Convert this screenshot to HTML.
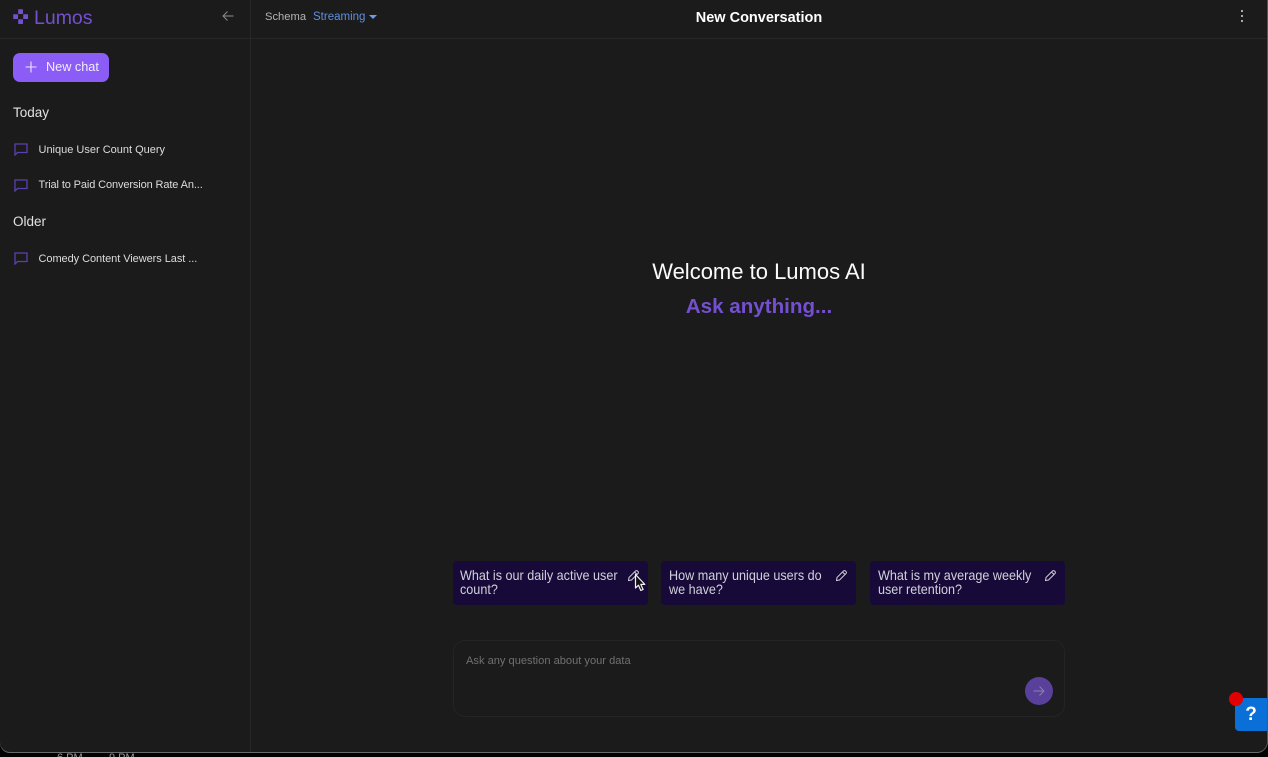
<!DOCTYPE html>
<html lang="en">
<head>
<meta charset="utf-8">
<title>Lumos</title>
<style>
html,body{margin:0;padding:0;width:1268px;height:757px;overflow:hidden;background:#000;font-family:"Liberation Sans",sans-serif;}
.abs,.t{position:absolute;}
.t{white-space:nowrap;line-height:1;}
#app{position:absolute;left:0;top:0;width:1267px;height:752px;background:#1b1b1b;border-radius:0 0 10px 10px;box-shadow:0 1px 0 #6a6a6a,1px 0 0 #555;overflow:hidden;}
.card{position:absolute;top:561px;width:195px;height:44px;background:#170a38;border-radius:4px;}
.card .q{position:absolute;left:7px;top:6.500px;font-size:14px;line-height:14px;color:#d2d0dc;white-space:nowrap;transform:scaleX(.9);transform-origin:left top;}
.card svg{position:absolute;top:7px;left:174px;}
.side{font-size:11px;color:#dcdcdc;}
</style>
</head>
<body>
<div class="t" style="left:57px;top:753px;font-size:11px;color:#999;height:4px;overflow:hidden;">6 PM</div>
<div class="t" style="left:109px;top:753px;font-size:11px;color:#999;height:4px;overflow:hidden;">9 PM</div>
<div id="app">
  <div class="abs" style="left:250px;top:0;width:1px;height:752px;background:#272727;"></div>
  <div class="abs" style="left:0;top:38px;width:1267px;height:1px;background:#272727;"></div>

  <svg class="abs" style="left:13px;top:9px;" width="16" height="16" viewBox="0 0 16 16" fill="#7450d0">
    <rect x="5.200" y="0.200" width="4.800" height="4.800" rx=".5"/>
    <rect x="0.200" y="5.200" width="4.800" height="4.800" rx=".5"/>
    <rect x="10.200" y="5.200" width="4.800" height="4.800" rx=".5"/>
    <rect x="5.200" y="10.200" width="4.800" height="4.800" rx=".5"/>
  </svg>
  <div class="t" style="left:34px;top:8.500px;font-size:19.500px;color:#7450d0;">Lumos</div>

  <svg class="abs" style="left:222px;top:10px;" width="12" height="12" viewBox="0 0 12 12" fill="none" stroke="#8f8f8f" stroke-width=".9">
    <path d="M11.500 6H1M5.500 1.500L1 6l4.500 4.500"/>
  </svg>

  <div class="t" style="left:265px;top:12px;font-size:11.200px;color:#b4b4b4;">Schema</div>
  <div class="t" style="left:313px;top:12px;font-size:11.500px;color:#5f8fe0;">Streaming</div>
  <div class="abs" style="left:369px;top:15px;width:0;height:0;border-left:4px solid transparent;border-right:4px solid transparent;border-top:4px solid #6f9ce8;"></div>

  <div class="t" style="left:659px;top:10.500px;width:200px;text-align:center;font-size:14.500px;font-weight:700;color:#fff;">New Conversation</div>

  <div class="abs" style="left:1241px;top:10px;width:2px;height:2px;background:#a8a8a8;"></div>
  <div class="abs" style="left:1241px;top:15px;width:2px;height:2px;background:#a8a8a8;"></div>
  <div class="abs" style="left:1241px;top:20px;width:2px;height:2px;background:#a8a8a8;"></div>

  <div class="abs" style="left:13px;top:53px;width:96px;height:29px;background:#8b5cf6;border-radius:7px;"></div>
  <svg class="abs" style="left:25px;top:61px;" width="12" height="12" viewBox="0 0 12 12" stroke="#ece6fc" stroke-width="1.100" fill="none">
    <path d="M6 0.500V11.500M0.500 6H11.500"/>
  </svg>
  <div class="t" style="left:46px;top:61px;font-size:12.700px;color:#f1edfd;">New chat</div>

  <div class="t" style="left:13px;top:106px;font-size:13.500px;color:#e2e2e2;">Today</div>

  <svg class="abs" style="left:14px;top:143px;" width="14" height="13" viewBox="0 0 14 13" fill="none" stroke="#5c3fb0" stroke-width="1.300">
    <path d="M1 1h12v8.500H3.500L1 12z"/>
  </svg>
  <div class="t side" style="left:38.500px;top:144.500px;">Unique User Count Query</div>

  <svg class="abs" style="left:14px;top:179px;" width="14" height="13" viewBox="0 0 14 13" fill="none" stroke="#5c3fb0" stroke-width="1.300">
    <path d="M1 1h12v8.500H3.500L1 12z"/>
  </svg>
  <div class="t side" style="left:38.500px;top:180px;letter-spacing:-.12px;">Trial to Paid Conversion Rate An...</div>

  <div class="t" style="left:13px;top:215px;font-size:13.500px;color:#e2e2e2;">Older</div>

  <svg class="abs" style="left:14px;top:252px;" width="14" height="13" viewBox="0 0 14 13" fill="none" stroke="#5c3fb0" stroke-width="1.300">
    <path d="M1 1h12v8.500H3.500L1 12z"/>
  </svg>
  <div class="t side" style="left:38.500px;top:254px;letter-spacing:-.06px;">Comedy Content Viewers Last ...</div>

  <div class="t" style="left:559px;top:261px;width:400px;text-align:center;font-size:22px;color:#fbfbfb;">Welcome to Lumos AI</div>
  <div class="t" style="left:559px;top:297px;width:400px;text-align:center;font-size:20.600px;font-weight:700;color:#7450d0;">Ask anything...</div>

  <div class="card" style="left:453px;">
    <div class="q">What is our daily active user<br>count?</div>
    <svg width="14" height="14" viewBox="0 0 14 14" fill="none" stroke="#cfcdd8" stroke-width="1"><path d="M2 9.500L8.500 3a1.400 1.400 0 0 1 2 0l.5.500a1.400 1.400 0 0 1 0 2L4.500 12l-3 .500zM7.500 4l2.500 2.500"/></svg>
  </div>
  <div class="card" style="left:661px;">
    <div class="q" style="left:8px;">How many unique users do<br>we have?</div>
    <svg width="14" height="14" viewBox="0 0 14 14" fill="none" stroke="#cfcdd8" stroke-width="1"><path d="M2 9.500L8.500 3a1.400 1.400 0 0 1 2 0l.5.500a1.400 1.400 0 0 1 0 2L4.500 12l-3 .500zM7.500 4l2.500 2.500"/></svg>
  </div>
  <div class="card" style="left:870px;">
    <div class="q" style="left:8px;">What is my average weekly<br>user retention?</div>
    <svg width="14" height="14" viewBox="0 0 14 14" fill="none" stroke="#cfcdd8" stroke-width="1"><path d="M2 9.500L8.500 3a1.400 1.400 0 0 1 2 0l.5.500a1.400 1.400 0 0 1 0 2L4.500 12l-3 .500zM7.500 4l2.500 2.500"/></svg>
  </div>

  <svg class="abs" style="left:634px;top:573px;" width="14" height="20" viewBox="0 0 14 20">
    <path d="M1.500 1.500V15l3-2.800 2.300 5.300 2.300-1-2.300-5.100h4z" fill="#111" stroke="#f2f2f2" stroke-width="1.200" stroke-linejoin="round"/>
  </svg>

  <div class="abs" style="left:453px;top:640px;width:610px;height:75px;border:1px solid #242424;border-radius:12px;"></div>
  <div class="t" style="left:466px;top:655.500px;font-size:11.100px;color:#707070;">Ask any question about your data</div>
  <div class="abs" style="left:1025px;top:677px;width:28px;height:28px;border-radius:50%;background:#59409a;"></div>
  <svg class="abs" style="left:1033px;top:685px;" width="12" height="12" viewBox="0 0 12 12" fill="none" stroke="#8f80b0" stroke-width=".9">
    <path d="M0.500 6H11M6.500 1.500L11 6l-4.500 4.500"/>
  </svg>

  <div class="abs" style="left:1235px;top:698px;width:32px;height:33px;background:#0a6fd6;border-radius:4px 0 0 4px;"></div>
  <div class="t" style="left:1235px;top:705px;width:32px;text-align:center;font-size:19px;font-weight:700;color:#fff;">?</div>
  <div class="abs" style="left:1229px;top:692px;width:14px;height:14px;border-radius:50%;background:#e30000;"></div>
</div>
</body>
</html>
